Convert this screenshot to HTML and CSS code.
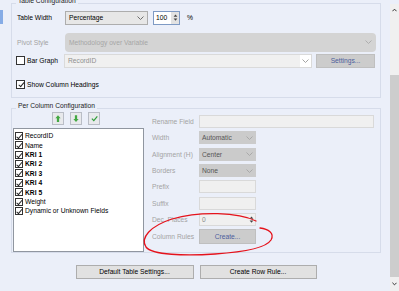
FILE: index.html
```html
<!DOCTYPE html>
<html lang="en">
<head>
    <meta charset="UTF-8">
    <meta name="viewport" content="width=device-width, initial-scale=1.0">
    <title>Table Configuration</title>
    <link rel="stylesheet" href="styles.css">
</head>
<body>
    <div class="screen">
        <div class="rail"><span class="rail-mark"></span></div>

        <div class="panel">
            <fieldset class="group group-table">
                <legend>Table Configuration</legend>
                <div class="row row-width">
                    <span class="lbl">Table Width</span>
                    <div class="combo combo-width">
                        <span>Percentage</span>
                        <svg class="chev" viewBox="0 0 7 4"><path d="M0.5 0.5 L3.5 3.5 L6.5 0.5"/></svg>
                    </div>
                    <div class="spin spin-width">
                        <span class="spin-val">100</span>
                        <span class="spin-btns">
                            <svg viewBox="0 0 6 4"><path d="M0.5 3.5 L3 0.5 L5.5 3.5 Z"/></svg>
                            <svg viewBox="0 0 6 4"><path d="M0.5 0.5 L3 3.5 L5.5 0.5 Z"/></svg>
                        </span>
                    </div>
                    <span class="unit">%</span>
                </div>
                <div class="row row-pivot">
                    <span class="lbl dim">Pivot Style</span>
                    <div class="combo combo-pivot">
                        <span>Methodology over Variable</span>
                        <svg class="chev" viewBox="0 0 7 4"><path d="M0.5 0.5 L3.5 3.5 L6.5 0.5"/></svg>
                    </div>
                </div>
                <div class="row row-bar">
                    <label class="check lbl"><span class="box"></span>Bar Graph</label>
                    <div class="combo combo-bar">
                        <span>RecordID</span>
                        <span class="chev-box"><svg class="chev" viewBox="0 0 7 4"><path d="M0.5 0.5 L3.5 3.5 L6.5 0.5"/></svg></span>
                    </div>
                    <button class="btn btn-off btn-settings">Settings...</button>
                </div>
                <div class="row row-headings">
                    <label class="check"><span class="box on"></span>Show Column Headings</label>
                </div>
            </fieldset>

            <fieldset class="group group-cols">
                <legend>Per Column Configuration</legend>
                <div class="cols">
                    <div class="col-left">
                        <div class="order-btns">
                            <button class="icon-btn" title="Move up">
                                <svg viewBox="0 0 8 10"><path d="M4 0.5 L7.5 4.5 H5.5 V9.5 H2.5 V4.5 H0.5 Z"/></svg>
                            </button>
                            <button class="icon-btn" title="Move down">
                                <svg viewBox="0 0 8 10"><path d="M4 9.5 L7.5 5.5 H5.5 V0.5 H2.5 V5.5 H0.5 Z"/></svg>
                            </button>
                            <button class="icon-btn" title="Check all">
                                <svg viewBox="0 0 8 8" class="tick"><path d="M1 4.2 L3.2 6.4 L7.2 1.6"/></svg>
                            </button>
                        </div>
                        <ul class="field-list">
                            <li><span class="box on"></span>RecordID</li>
                            <li><span class="box on"></span>Name</li>
                            <li class="strong"><span class="box on"></span>KRI 1</li>
                            <li class="strong"><span class="box on"></span>KRI 2</li>
                            <li class="strong"><span class="box on"></span>KRI 3</li>
                            <li class="strong"><span class="box on"></span>KRI 4</li>
                            <li class="strong"><span class="box on"></span>KRI 5</li>
                            <li><span class="box on"></span>Weight</li>
                            <li><span class="box on"></span>Dynamic or Unknown Fields</li>
                        </ul>
                    </div>

                    <div class="col-right">
                        <div class="field-row">
                            <span class="flbl">Rename Field</span>
                            <div class="text-box wide"></div>
                        </div>
                        <div class="field-row">
                            <span class="flbl">Width</span>
                            <div class="combo combo-off"><span>Automatic</span><svg class="chev" viewBox="0 0 7 4"><path d="M0.5 0.5 L3.5 3.5 L6.5 0.5"/></svg></div>
                        </div>
                        <div class="field-row">
                            <span class="flbl">Alignment (H)</span>
                            <div class="combo combo-off"><span>Center</span><svg class="chev" viewBox="0 0 7 4"><path d="M0.5 0.5 L3.5 3.5 L6.5 0.5"/></svg></div>
                        </div>
                        <div class="field-row">
                            <span class="flbl">Borders</span>
                            <div class="combo combo-off"><span>None</span><svg class="chev" viewBox="0 0 7 4"><path d="M0.5 0.5 L3.5 3.5 L6.5 0.5"/></svg></div>
                        </div>
                        <div class="field-row">
                            <span class="flbl">Prefix</span>
                            <div class="text-box"></div>
                        </div>
                        <div class="field-row">
                            <span class="flbl">Suffix</span>
                            <div class="text-box"></div>
                        </div>
                        <div class="field-row">
                            <span class="flbl">Dec. Places</span>
                            <div class="spin spin-off">
                                <span class="spin-val">0</span>
                                <span class="spin-btns">
                                    <svg viewBox="0 0 6 4"><path d="M0.5 3.5 L3 0.5 L5.5 3.5 Z"/></svg>
                                    <svg viewBox="0 0 6 4"><path d="M0.5 0.5 L3 3.5 L5.5 0.5 Z"/></svg>
                                </span>
                            </div>
                        </div>
                        <div class="field-row field-row-btn">
                            <span class="flbl">Column Rules</span>
                            <button class="btn btn-off btn-create">Create...</button>
                        </div>
                    </div>
                </div>
            </fieldset>

            <div class="actions">
                <button class="btn btn-default">Default Table Settings...</button>
                <button class="btn btn-row">Create Row Rule...</button>
            </div>
        </div>

        <div class="scrollbar">
            <span class="sb-arrow">
                <svg viewBox="0 0 6 4"><path d="M0.5 3.5 L3 1 L5.5 3.5"/></svg>
            </span>
            <span class="sb-gap"></span>
            <span class="sb-thumb"></span>
            <span class="sb-arrow sb-arrow-down">
                <svg viewBox="0 0 6 4"><path d="M0.5 0.5 L3 3 L5.5 0.5"/></svg>
            </span>
        </div>

        <svg class="markup" viewBox="0 0 399 291">
            <path d="M256 221 C238 212 200 211 172 219 C150 226 140 238 146 247 C152 255 185 256 215 254 C245 252 266 248 271 240 C275 233 268 229 260 228"/>
        </svg>
    </div>
</body>
</html>
```

FILE: styles.css
```css
* {
    box-sizing: border-box;
}
body {
    margin: 0;
    background: #ebeff9;
    font-family: "Liberation Sans", Arial, sans-serif;
    font-size: 6.7px;
    color: #000;
    overflow: hidden;
}
button {
    font: inherit;
    margin: 0;
    padding: 0;
}
.screen {
    position: relative;
    display: flex;
    width: 399px;
    height: 291px;
}

/* left rail */
.rail {
    width: 11px;
    padding-top: 10px;
}
.rail-mark {
    display: block;
    width: 3px;
    height: 14px;
    background: #86ace6;
}

/* main panel */
.panel {
    width: 379px;
    padding-right: 9px;
}
.group {
    margin: 0;
    padding: 0;
    min-width: 0;
    border: 1px solid #d6dcea;
}
.group legend {
    margin-left: 4px;
    padding: 0 2px 6px;
    line-height: 8px;
    color: #222;
}
.group-table {
    margin-top: -3.4px;
    padding-bottom: 7px;
}
.group-cols {
    margin-top: 4px;
}
.group-cols .cols {
    margin-top: -4px;
}

.row {
    display: flex;
    align-items: center;
    height: 14px;
    padding-left: 5px;
}
.lbl {
    width: 48px;
    flex: none;
}
.dim {
    color: #a3a3a3;
}
.row-pivot {
    margin-top: 8px;
    height: 19px;
}
.row-bar {
    margin-top: 2px;
}
.row-headings {
    margin-top: 12px;
    height: 10px;
}

.check {
    display: flex;
    align-items: center;
    margin-left: -1px;
}
.box {
    display: block;
    flex: none;
    width: 9px;
    height: 9px;
    margin-right: 2px;
    border: 1px solid #333;
    background: #fff;
}
.box.on::after {
    content: "";
    display: block;
    width: 2px;
    height: 5px;
    margin: 0 0 0 2.5px;
    border: solid #222;
    border-width: 0 1px 1px 0;
    transform: rotate(40deg);
}

/* combos, spinners, boxes */
.combo {
    display: flex;
    align-items: center;
    justify-content: space-between;
    height: 14px;
    padding: 0 3px;
    border: 1px solid #adadad;
    background: #e7e7e7;
}
.chev {
    width: 7px;
    height: 4px;
    fill: none;
    stroke: #606060;
    stroke-width: 0.9;
}
.combo-width {
    width: 83px;
}
.combo-pivot {
    width: 311px;
    height: 19px;
    border: none;
    border-radius: 4px;
    background: #d4d4d4;
    color: #a6a6a6;
    padding: 0 4px 0 4px;
}
.combo-pivot .chev {
    stroke: #a9a9a9;
}
.combo-bar {
    width: 248px;
    padding-right: 0;
    border-color: #dadada;
    background: #f0f0f0;
    color: #8f8f8f;
}
.chev-box {
    display: flex;
    align-items: center;
    justify-content: center;
    width: 11px;
    height: 12px;
    background: #fff;
}
.chev-box .chev {
    stroke: #9a9a9a;
}

.spin {
    display: flex;
    align-items: center;
    justify-content: space-between;
    height: 14px;
    border: 1px solid #7e9ac4;
    background: #fff;
}
.spin-width {
    width: 27px;
    margin-left: 5px;
}
.spin-val {
    padding-left: 2px;
}
.spin-btns {
    display: flex;
    flex-direction: column;
    justify-content: center;
    gap: 1px;
    width: 8px;
    height: 12px;
    background: #e2e2e2;
}
.spin-btns svg {
    display: block;
    width: 5px;
    height: 3px;
    margin: 0 auto;
    fill: #444;
}
.unit {
    margin-left: 7px;
}

/* buttons */
.btn {
    height: 14px;
    border: 1px solid #adadad;
    background: #e1e1e1;
    color: #000;
}
.btn-off {
    border-color: #bfbfbf;
    background: #cccccc;
    color: #4d5e9c;
}
.btn-settings {
    width: 59px;
    margin-left: 4px;
}

/* per column section */
.cols {
    display: flex;
    padding-left: 1px;
}
.col-left {
    width: 131px;
    flex: none;
}
.order-btns {
    display: flex;
    gap: 6px;
    height: 13px;
    margin-left: 39px;
}
.icon-btn {
    display: flex;
    align-items: center;
    justify-content: center;
    width: 12px;
    height: 13px;
    border: 1px solid #b9bdc6;
    background: #e8e9ec;
}
.icon-btn svg {
    width: 6px;
    height: 9px;
    fill: #43a843;
}
.icon-btn .tick {
    width: 7px;
    height: 7px;
    fill: none;
    stroke: #2f9e3a;
    stroke-width: 1.4;
}
.field-list {
    list-style: none;
    margin: 3px 0 0;
    padding: 2.5px 0 0 1px;
    height: 124px;
    border: 1px solid #9096a0;
    background: #fff;
}
.field-list li {
    display: flex;
    align-items: center;
    height: 9.4px;
}
.field-list .box {
    width: 8px;
    height: 8px;
    margin-right: 2px;
}
.field-list .box.on::after {
    height: 4.5px;
    margin-left: 2px;
}
.field-list .strong {
    font-weight: bold;
}

.col-right {
    display: flex;
    flex-direction: column;
    gap: 3.3px;
    margin-left: 8px;
    padding-top: 3.5px;
}
.field-row {
    display: flex;
    align-items: center;
    height: 13px;
}
.field-row-btn {
    height: 15px;
}
.flbl {
    width: 47px;
    flex: none;
    color: #a3a3a3;
}
.text-box {
    width: 57px;
    height: 13px;
    border: 1px solid #d9d9d9;
    background: #f0f0f0;
}
.text-box.wide {
    width: 175px;
}
.combo-off {
    width: 57px;
    height: 13px;
    border: none;
    background: #cbcbcb;
    color: #555;
}
.combo-off .chev {
    stroke: #a5a5a5;
}
.spin-off {
    width: 57px;
    height: 13px;
    border-color: #d9d9d9;
    background: #f0f0f0;
    color: #8a8a8a;
}
.spin-off .spin-btns {
    height: 11px;
    background: #f0f0f0;
}
.btn-create {
    width: 57px;
    height: 15px;
}

.actions {
    display: flex;
    justify-content: center;
    gap: 6px;
    margin-top: 12px;
}
.btn-default {
    width: 118px;
}
.btn-row {
    width: 117px;
}

/* scrollbar */
.scrollbar {
    display: flex;
    flex-direction: column;
    width: 9px;
    margin-top: 4px;
    background: #f0f0f0;
}
.sb-arrow {
    display: flex;
    align-items: center;
    justify-content: center;
    height: 12px;
    flex: none;
}
.sb-arrow-down {
    height: 14px;
}
.sb-arrow svg {
    width: 5px;
    height: 4px;
    fill: none;
    stroke: #333;
    stroke-width: 1.2;
}
.sb-gap {
    height: 59px;
    flex: none;
}
.sb-thumb {
    flex: 1;
    background: #cdcdcd;
}

/* red hand-drawn markup */
.markup {
    position: absolute;
    left: 0;
    top: 0;
    width: 399px;
    height: 291px;
    pointer-events: none;
    fill: none;
    stroke: #e5121b;
    stroke-width: 1.3;
    stroke-linecap: round;
}
```
